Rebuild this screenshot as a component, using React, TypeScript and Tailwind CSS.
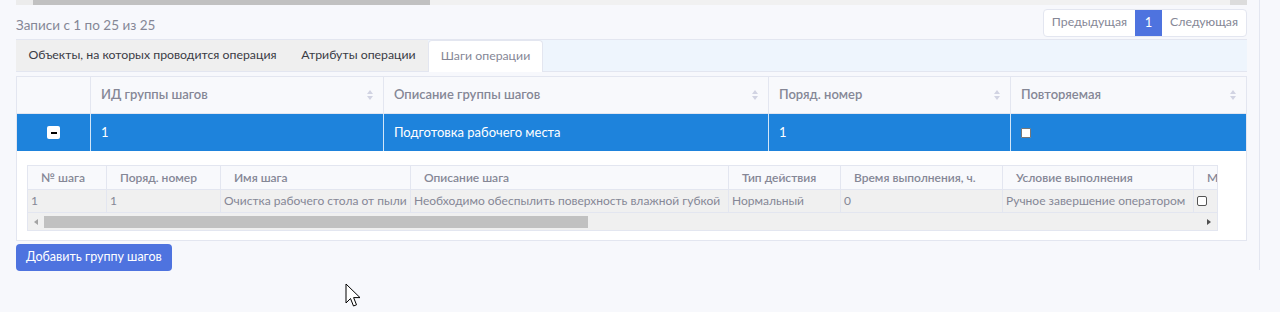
import React from "react";

const font = { fontFamily: 'Lato, "Noto Sans", sans-serif' };

const SortIcon = () => (
  <span className="ml-auto flex flex-col gap-[2px] text-[#d1d3e2]">
    <svg width="6" height="4" viewBox="0 0 6 4">
      <path d="M3 0 L6 4 L0 4 Z" fill="currentColor" />
    </svg>
    <svg width="6" height="4" viewBox="0 0 6 4">
      <path d="M0 0 L6 0 L3 4 Z" fill="currentColor" />
    </svg>
  </span>
);

const mainCols = [
  { w: "w-[73px]", label: "" },
  { w: "w-[293px]", label: "ИД группы шагов" },
  { w: "w-[385px]", label: "Описание группы шагов" },
  { w: "w-[242px]", label: "Поряд. номер" },
  { w: "flex-1", label: "Повторяемая" },
];

const subCols = [
  { w: "w-[78px]", label: "№ шага", val: "1" },
  { w: "w-[114px]", label: "Поряд. номер", val: "1" },
  { w: "w-[190px]", label: "Имя шага", val: "Очистка рабочего стола от пыли" },
  { w: "w-[318px]", label: "Описание шага", val: "Необходимо обеспылить поверхность влажной губкой" },
  { w: "w-[112px]", label: "Тип действия", val: "Нормальный" },
  { w: "w-[162px]", label: "Время выполнения, ч.", val: "0" },
  { w: "w-[191px]", label: "Условие выполнения", val: "Ручное завершение оператором" },
  { w: "w-[60px]", label: "Мо", val: "" },
];

export default function App() {
  return (
    <div className="relative flex h-[312px] w-[1280px] overflow-hidden bg-[#f7f8fc]" style={font}>
      <div className="flex w-[1247px] flex-col pl-4">
        {/* previous table scrollbar */}
        <div className="flex h-[5px] bg-[#f1f1f1]">
          <div className="w-[17px] bg-[#ececec]" />
          <div className="w-[397px] bg-[#c1c1c1]" />
          <div className="flex-1" />
          <div className="w-[17px] bg-[#dcdcdc]" />
        </div>

        <div className="mt-[3px] flex h-[29px] items-center justify-between">
          <span className="pt-[5px] text-[13.5px] text-[#858796]">Записи с 1 по 25 из 25</span>
          <div className="flex h-[28px] overflow-hidden rounded-[4px] border border-[#e3e6f0] bg-white text-[12.3px]">
            <span className="flex items-center px-[8px] text-[#858796]">Предыдущая</span>
            <span className="flex w-[27px] items-center justify-center bg-[#4e73df] text-[13px] text-white">1</span>
            <span className="flex items-center px-[8px] text-[#858796]">Следующая</span>
          </div>
        </div>

        {/* tabs */}
        <div className="mt-[2px] flex h-[33px] border-y border-[#e3e6f0] bg-[#eef5fd] text-[12.3px] text-[#3a3b45]">
          <div className="flex w-[273px] items-center justify-center whitespace-nowrap bg-[#efefef]">
            Объекты, на которых проводится операция
          </div>
          <div className="flex w-[139px] items-center justify-center whitespace-nowrap bg-[#efefef]">
            Атрибуты операции
          </div>
          <div className="-mb-px flex w-[115px] items-center justify-center whitespace-nowrap rounded-t-[4px] border-x border-t border-[#e3e6f0] bg-white text-[#858796]">
            Шаги операции
          </div>
        </div>

        {/* main table */}
        <div className="mt-[4px] flex flex-col border border-[#e3e6f0] bg-white">
          <div className="flex h-[37px] border-b border-[#e3e6f0] bg-[#f8f9fc] text-[13px] font-semibold text-[#858796]">
            {mainCols.map((c, i) => (
              <div
                key={i}
                className={`${c.w} flex items-center px-[10px] ${i > 0 ? "border-l border-[#e3e6f0]" : ""}`}
              >
                {c.label}
                {c.label && <SortIcon />}
              </div>
            ))}
          </div>
          <div className="flex h-[37px] bg-[#1e83dc] text-[13px] text-white">
            <div className="flex w-[73px] items-center justify-center">
              <span className="flex h-[13px] w-[13px] items-center justify-center rounded-[2px] bg-white">
                <span className="h-[2px] w-[6px] bg-black" />
              </span>
            </div>
            <div className="flex w-[293px] items-center border-l border-white/80 px-[10px]">1</div>
            <div className="flex w-[385px] items-center border-l border-white/80 px-[10px]">
              Подготовка рабочего места
            </div>
            <div className="flex w-[242px] items-center border-l border-white/80 px-[10px]">1</div>
            <div className="flex flex-1 items-center border-l border-white/80 px-[10px]">
              <span className="h-[10px] w-[10px] rounded-[1px] border border-[#777] bg-white" />
            </div>
          </div>

          {/* detail */}
          <div className="px-[10px] pb-[9px] pt-[14px]">
            <div className="w-[1191px] overflow-hidden border border-[#e3e6f0] text-[12px] text-[#858796]">
              <div className="flex w-max bg-[#f8f9fc] font-semibold">
                {subCols.map((c, i) => (
                  <div
                    key={i}
                    className={`${c.w} flex h-[23px] shrink-0 items-center whitespace-nowrap pl-[13px] ${
                      i > 0 ? "border-l border-[#e3e6f0]" : ""
                    }`}
                  >
                    {c.label}
                  </div>
                ))}
              </div>
              <div className="flex w-max border-y border-[#e3e6f0] bg-[#f0f0f0]">
                {subCols.map((c, i) => (
                  <div
                    key={i}
                    className={`${c.w} flex h-[22px] shrink-0 items-center overflow-hidden whitespace-nowrap px-[3px] ${
                      i > 0 ? "border-l border-[#e3e6f0]" : ""
                    }`}
                  >
                    {i === 7 ? (
                      <span className="h-[10px] w-[10px] rounded-[2px] border border-[#555] bg-white" />
                    ) : (
                      c.val
                    )}
                  </div>
                ))}
              </div>
              <div className="flex h-[17px] items-center bg-[#f0f0f0]">
                <span className="flex w-[16px] justify-center text-[#a3a3a3]">
                  <svg width="4" height="6" viewBox="0 0 4 6">
                    <path d="M4 0 L0 3 L4 6 Z" fill="currentColor" />
                  </svg>
                </span>
                <div className="h-[12px] w-[544px] bg-[#c1c1c1]" />
                <div className="flex-1" />
                <span className="flex w-[16px] justify-center text-[#505050]">
                  <svg width="4" height="6" viewBox="0 0 4 6">
                    <path d="M0 0 L4 3 L0 6 Z" fill="currentColor" />
                  </svg>
                </span>
              </div>
            </div>
          </div>
        </div>

        <div className="mt-[2px]">
          <button className="h-[27px] rounded-[4px] bg-[#4e73df] px-[10px] text-[12.5px] text-white">
            Добавить группу шагов
          </button>
        </div>
      </div>

      <div className="ml-[12px] h-[270px] w-px bg-[#e3e6f0]" />

      {/* mouse cursor */}
      <svg className="absolute left-[345px] top-[283px]" width="18" height="26" viewBox="0 0 18 26">
        <path
          d="M1 1 L1 20 L5.5 15.5 L8.5 23 L11.5 21.8 L8.6 14.6 L15 14.6 Z"
          fill="white"
          stroke="black"
          strokeWidth="1"
          strokeLinejoin="round"
        />
      </svg>
    </div>
  );
}
